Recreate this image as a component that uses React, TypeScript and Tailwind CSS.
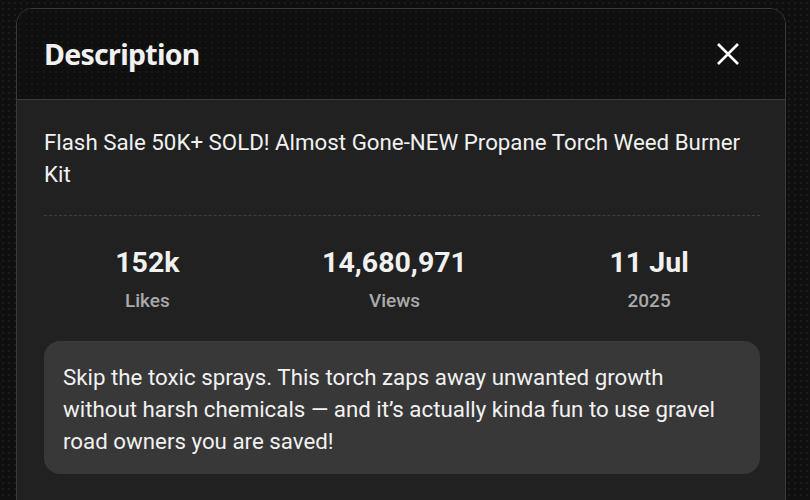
export default function App() {
  const stats = [
    { value: "152k", label: "Likes" },
    { value: "14,680,971", label: "Views" },
    { value: "11 Jul", label: "2025" },
  ];

  return (
    <div className="h-[500px] w-[810px] overflow-hidden bg-[#0f0f0f] bg-[radial-gradient(#2a2a2a_0.6px,transparent_0.8px)] bg-[length:6px_6px] pl-4 pt-2 pr-6 font-['Roboto',sans-serif]">
      <div className="flex h-[520px] flex-col overflow-hidden rounded-t-2xl border border-[#3a3a3a]">
        <div className="flex h-[91px] shrink-0 items-center justify-between border-b border-[#3d3d3d] bg-[#0f0f0f] bg-[radial-gradient(#222_0.6px,transparent_0.8px)] bg-[length:6px_6px] pl-[27px] pr-[45px]">
          <h1 className="font-['Noto_Sans',sans-serif] text-[28.5px] font-bold tracking-[-0.7px] text-[#f1f1f1]">
            Description
          </h1>
          <button className="text-white">
            <svg width="24" height="24" viewBox="0 0 24 24" fill="none" stroke="currentColor" strokeWidth="2.6" strokeLinecap="butt">
              <path d="M2 2 L22 22 M22 2 L2 22" />
            </svg>
          </button>
        </div>

        <div className="flex-1 bg-[#212121] pl-[27px] pr-[25px] pt-[26px]">
          <p className="text-[22.3px] leading-[32px] text-[#f1f1f1]">
            Flash Sale 50K+ SOLD! Almost Gone-NEW Propane Torch Weed Burner Kit
          </p>

          <div className="mt-[25px] border-t border-dashed border-[#3f3f3f]" />

          <div className="flex justify-around pt-[30px]">
            {stats.map((s) => (
              <div key={s.label} className="flex flex-col items-center">
                <span className="text-[28.5px] font-bold leading-[34px] text-[#f1f1f1]">{s.value}</span>
                <span className="mt-[9px] text-[19px] font-medium leading-[24px] text-[#aaaaaa]">{s.label}</span>
              </div>
            ))}
          </div>

          <div className="mt-[28px] rounded-2xl bg-[#383838] px-[19px] pb-[17px] pt-[20px]">
            <p className="text-[22.3px] leading-[32px] text-[#f1f1f1]">
              Skip the toxic sprays. This torch zaps away unwanted growth without harsh chemicals — and it’s actually kinda fun to use gravel road owners you are saved!
            </p>
          </div>
        </div>
      </div>
    </div>
  );
}
